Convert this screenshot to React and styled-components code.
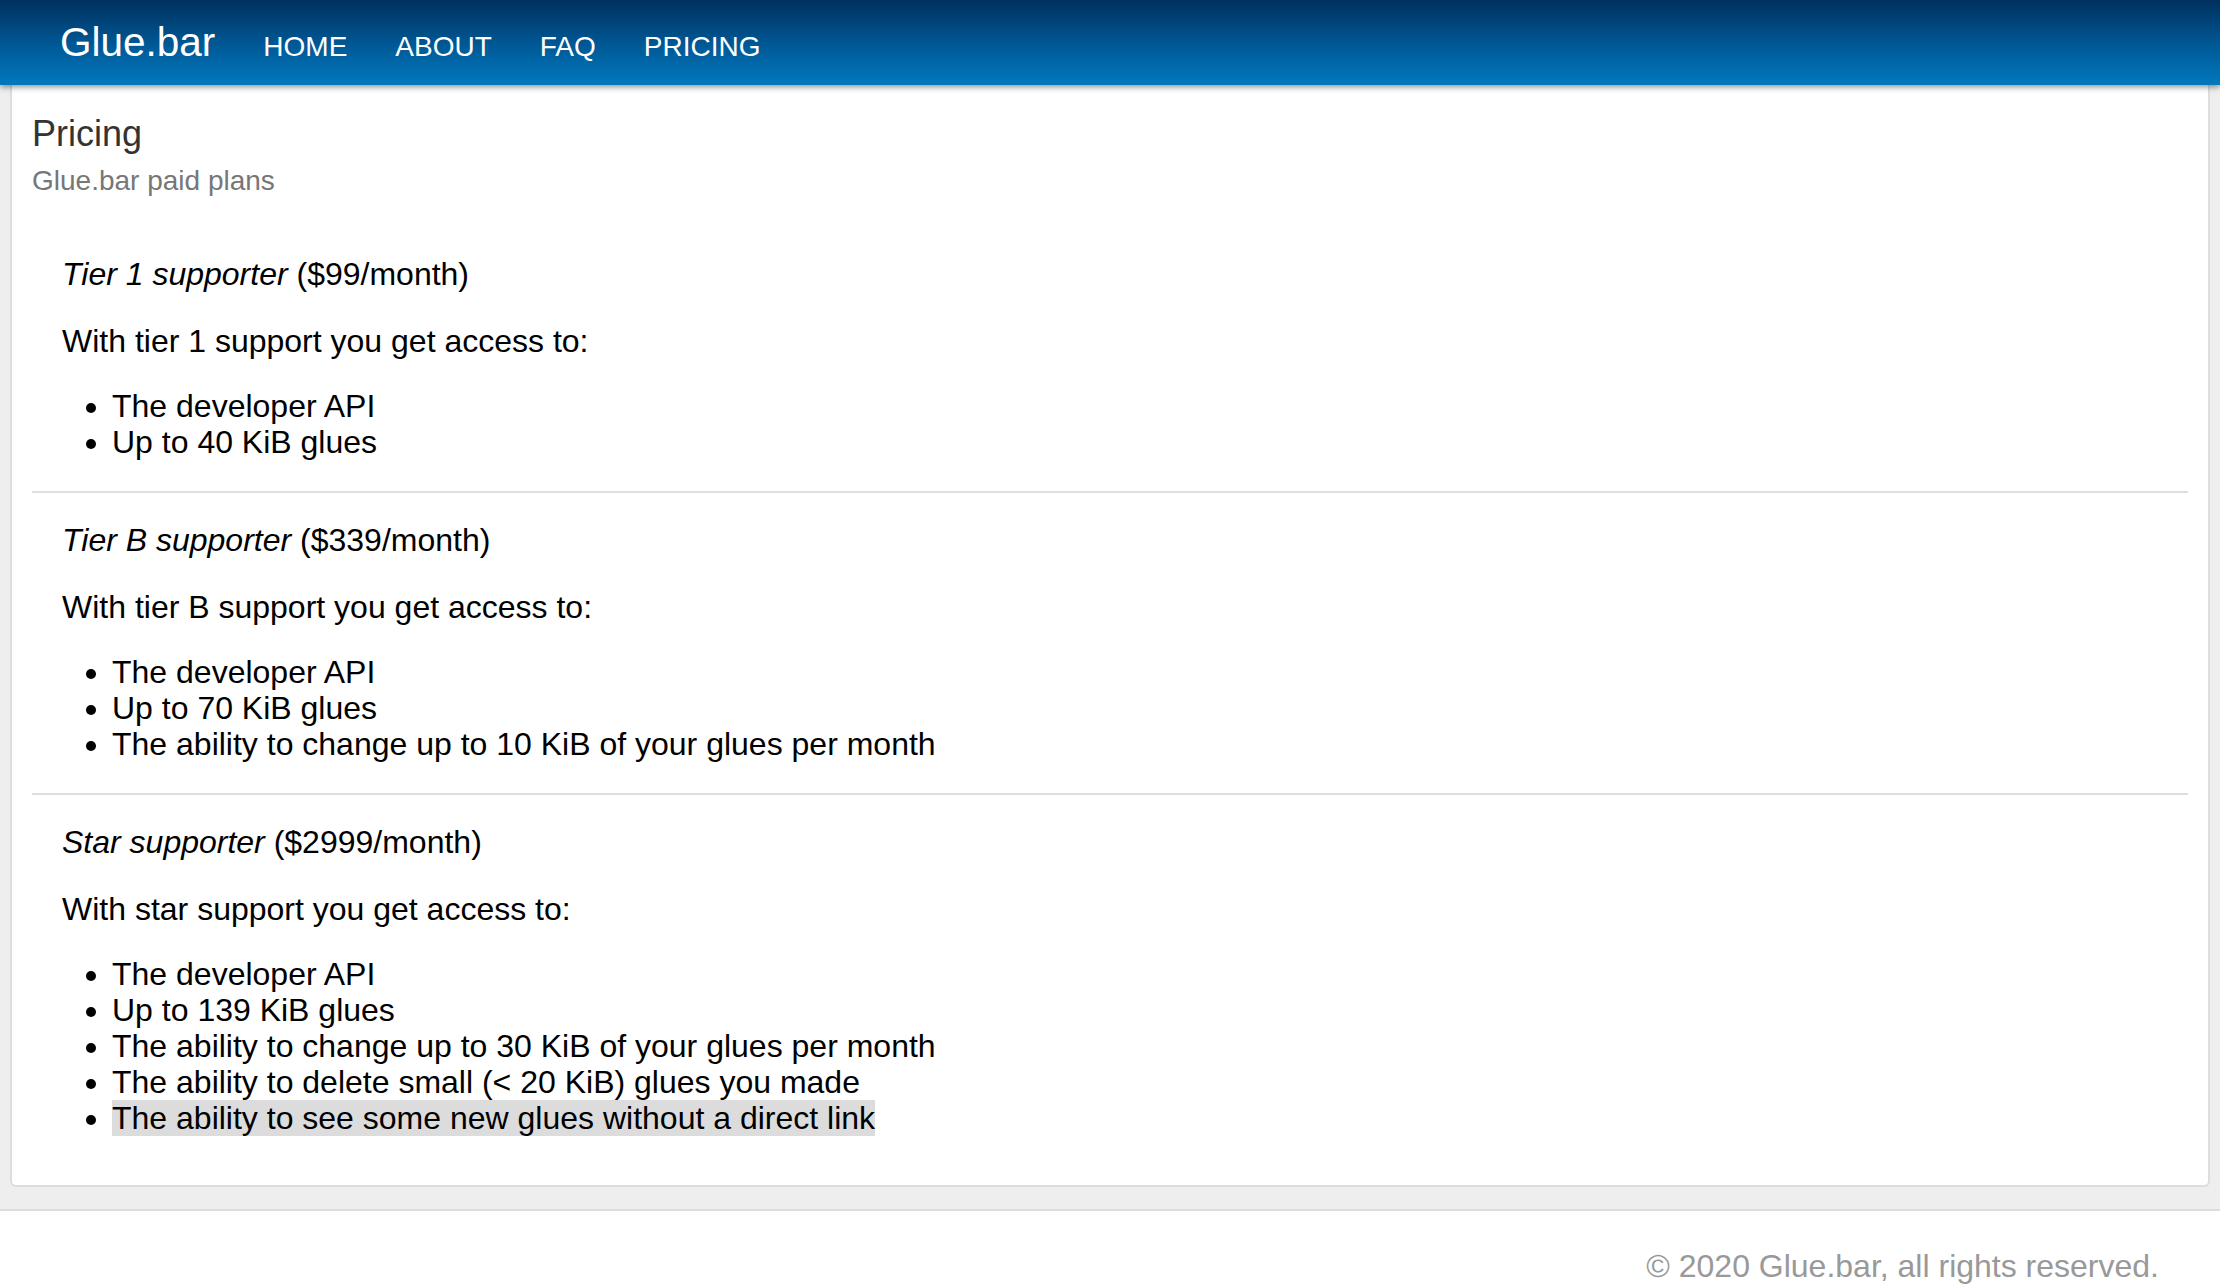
import React from "react";
import styled, { createGlobalStyle } from "styled-components";

const GlobalStyle = createGlobalStyle`
  html, body {
    margin: 0;
    padding: 0;
    background: #ffffff;
    font-family: "Liberation Sans", Arial, Helvetica, sans-serif;
  }
  * { box-sizing: border-box; }
`;

const Header = styled.header`
  position: relative;
  z-index: 2;
  height: 85px;
  padding-left: 60px;
  background: linear-gradient(to bottom, #00305e 0%, #005a98 55%, #0079bd 100%);
  box-shadow: 0 2px 6px rgba(0, 0, 0, 0.45);
  display: flex;
  align-items: flex-start;
`;

const NavRow = styled.nav`
  display: flex;
  align-items: baseline;
  gap: 48px;
`;

const Brand = styled.a`
  font-size: 40.5px;
  line-height: 85px;
  color: #ffffff;
  text-decoration: none;
`;

const NavLink = styled.a`
  font-size: 28px;
  color: #ffffff;
  text-decoration: none;
  text-transform: uppercase;
`;

const Main = styled.main`
  background: #eeeeee;
  padding: 0 10px 22px;
  border-bottom: 2px solid #dddddd;
`;

const Card = styled.section`
  background: #ffffff;
  border: 2px solid #dddddd;
  border-top: none;
  border-radius: 0 0 6px 6px;
  padding: 29px 20px 18px;
`;

const Title = styled.h1`
  margin: 0;
  font-size: 36px;
  line-height: 40px;
  font-weight: normal;
  color: #333333;
`;

const Subtitle = styled.p`
  margin: 7px 0 26px;
  font-size: 28px;
  line-height: 40px;
  color: #777777;
`;

const Tier = styled.div`
  padding: 29px 0 31px 30px;
  border-bottom: ${(p) => (p.$last ? "none" : "2px solid #dedede")};
  color: #000000;
  font-size: 32px;
  line-height: 36px;
`;

const TierHeading = styled.p`
  margin: 0 0 31px;
  em { font-style: italic; }
`;

const Intro = styled.p`
  margin: 0 0 29px;
`;

const Perks = styled.ul`
  margin: 0;
  padding-left: 50px;
  list-style: disc;
`;

const Perk = styled.li`
  line-height: 36px;
`;

const Highlight = styled.span`
  background: #dcdcdc;
`;

const Footer = styled.footer`
  padding: 37px 61px 20px;
  text-align: right;
  font-size: 32px;
  line-height: 36px;
  color: #999999;
`;

const tiers = [
  {
    name: "Tier 1 supporter",
    price: "($99/month)",
    intro: "With tier 1 support you get access to:",
    perks: ["The developer API", "Up to 40 KiB glues"],
  },
  {
    name: "Tier B supporter",
    price: "($339/month)",
    intro: "With tier B support you get access to:",
    perks: [
      "The developer API",
      "Up to 70 KiB glues",
      "The ability to change up to 10 KiB of your glues per month",
    ],
  },
  {
    name: "Star supporter",
    price: "($2999/month)",
    intro: "With star support you get access to:",
    perks: [
      "The developer API",
      "Up to 139 KiB glues",
      "The ability to change up to 30 KiB of your glues per month",
      "The ability to delete small (< 20 KiB) glues you made",
      { text: "The ability to see some new glues without a direct link", highlight: true },
    ],
  },
];

export default function App() {
  return (
    <>
      <GlobalStyle />
      <Header>
        <NavRow>
          <Brand href="#">Glue.bar</Brand>
          <NavLink href="#">Home</NavLink>
          <NavLink href="#">About</NavLink>
          <NavLink href="#">FAQ</NavLink>
          <NavLink href="#">Pricing</NavLink>
        </NavRow>
      </Header>
      <Main>
        <Card>
          <Title>Pricing</Title>
          <Subtitle>Glue.bar paid plans</Subtitle>
          {tiers.map((t, i) => (
            <Tier key={t.name} $last={i === tiers.length - 1}>
              <TierHeading>
                <em>{t.name}</em> {t.price}
              </TierHeading>
              <Intro>{t.intro}</Intro>
              <Perks>
                {t.perks.map((p) =>
                  typeof p === "string" ? (
                    <Perk key={p}>{p}</Perk>
                  ) : (
                    <Perk key={p.text}>
                      <Highlight>{p.text}</Highlight>
                    </Perk>
                  )
                )}
              </Perks>
            </Tier>
          ))}
        </Card>
      </Main>
      <Footer>© 2020 Glue.bar, all rights reserved.</Footer>
    </>
  );
}
